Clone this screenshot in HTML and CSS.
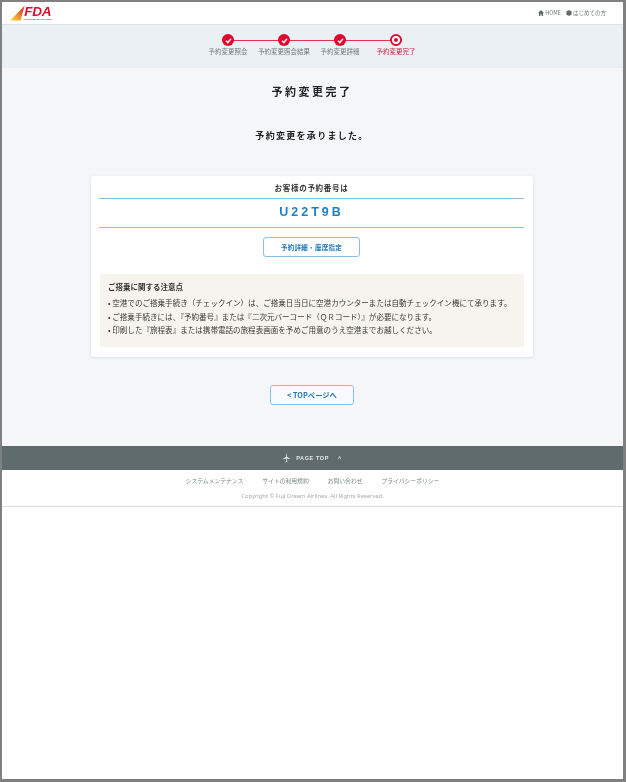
FILE: index.html
```html
<!DOCTYPE html>
<html lang="ja">
<head>
<meta charset="utf-8">
<title>予約変更完了</title>
<link rel="stylesheet" href="styles.css">
</head>
<body>
<div class="frame">
  <header class="site-header">
    <a class="logo">
      <svg class="wing" width="15" height="15" viewBox="0 0 15 15">
        <defs><linearGradient id="w" x1="0" y1="1" x2="1" y2="0"><stop offset="0.1" stop-color="#f6d23c"/><stop offset="0.55" stop-color="#ee7a28"/><stop offset="1" stop-color="#dc0d2e"/></linearGradient></defs>
        <path d="M0 14.5 L14.5 0 L10.5 14.5 Z" fill="url(#w)"/>
      </svg>
      <span class="logo-text"><span class="logo-name">FDA</span><span class="logo-sub">FUJI DREAM AIRLINES</span></span>
    </a>
    <nav class="top-nav">
      <a class="top-link"><svg width="6" height="6" viewBox="0 0 10 10"><path d="M5 0 L10 5 H8.5 V10 H6 V7 H4 V10 H1.500 V5 H0 Z" fill="#5f6b6d"/></svg>HOME</a>
      <a class="top-link"><svg width="6" height="6" viewBox="0 0 10 10"><circle cx="5" cy="5" r="4.500" fill="#5f6b6d"/></svg>はじめての方</a>
    </nav>
  </header>

  <section class="steps-band">
    <ol class="steps">
      <li class="step done"><span class="dot"><svg width="7" height="7" viewBox="0 0 10 10"><path d="M1.500 5.500 L4 8 L8.500 2.500" fill="none" stroke="#fff" stroke-width="2"/></svg></span><span class="label">予約変更照会</span></li>
      <li class="step done"><span class="dot"><svg width="7" height="7" viewBox="0 0 10 10"><path d="M1.500 5.500 L4 8 L8.500 2.500" fill="none" stroke="#fff" stroke-width="2"/></svg></span><span class="label">予約変更照会結果</span></li>
      <li class="step done"><span class="dot"><svg width="7" height="7" viewBox="0 0 10 10"><path d="M1.500 5.500 L4 8 L8.500 2.500" fill="none" stroke="#fff" stroke-width="2"/></svg></span><span class="label">予約変更詳細</span></li>
      <li class="step current"><span class="dot"><span class="dot-core"></span></span><span class="label">予約変更完了</span></li>
    </ol>
  </section>

  <main class="main">
    <h1 class="title">予約変更完了</h1>
    <p class="message">予約変更を承りました。</p>

    <section class="card">
      <h2 class="card-head">お客様の予約番号は</h2>
      <p class="code">U22T9B</p>
      <a class="btn btn-detail">予約詳細・座席指定</a>
      <div class="notes">
        <h3 class="notes-head">ご搭乗に関する注意点</h3>
        <ul class="notes-list">
          <li>空港でのご搭乗手続き（チェックイン）は、ご搭乗日当日に空港カウンターまたは自動チェックイン機にて承ります。</li>
          <li>ご搭乗手続きには、『予約番号』または『二次元バーコード（ＱＲコード）』が必要になります。</li>
          <li>印刷した『旅程表』または携帯電話の旅程表画面を予めご用意のうえ空港までお越しください。</li>
        </ul>
      </div>
    </section>

    <a class="btn btn-top">&lt; TOPページへ</a>
  </main>

  <a class="page-top">
    <svg width="7" height="12" viewBox="0 0 9 12"><path d="M4.500 0 C5 1 5 3 5 4.500 L9 7 V7.600 L5 6.800 L4.900 10 L6 11 V11.500 L4.500 11 L3 11.500 V11 L4.100 10 L4 6.800 L0 7.600 V7 L4 4.500 C4 3 4 1 4.500 0 Z" fill="#e6eaea"/></svg>
    <span>PAGE TOP</span>
    <span class="chev">^</span>
  </a>

  <footer class="site-footer">
    <nav class="foot-nav">
      <a>システムメンテナンス</a>
      <a>サイトの利用規約</a>
      <a>お問い合わせ</a>
      <a>プライバシーポリシー</a>
    </nav>
    <p class="copy">Copyright © Fuji Dream Airlines. All Rights Reserved.</p>
  </footer>
</div>
</body>
</html>
```

FILE: styles.css
```css
* { box-sizing: border-box; }
html, body { margin: 0; padding: 0; background: #fff; }
body { font-family: "Noto Sans CJK JP", "Noto Sans", sans-serif; color: #333; }
a { text-decoration: none; }
h1, h2, h3, p, ul, ol { margin: 0; padding: 0; list-style: none; }

.frame {
  width: 626px;
  height: 782px;
  border: solid #808080;
  border-width: 2px 3px 3px 2px;
  background: #fff;
  overflow: hidden;
  filter: blur(0.55px);
}

.site-header {
  height: 23px;
  display: flex;
  align-items: center;
  justify-content: space-between;
  padding: 0 17px 0 8px;
  background: #fff;
  border-bottom: 1px solid #dfe3e5;
}
.logo { display: flex; align-items: flex-end; height: 16px; margin-top: -1px; }
.wing { display: block; margin-right: -1px; }
.logo-text { display: flex; flex-direction: column; align-items: center; }
.logo-name {
  font: italic 700 13.5px/13px "Liberation Sans", sans-serif;
  color: #d8102f;
  letter-spacing: -0.3px;
}
.logo-sub {
  font: 700 2.5px/3px "Liberation Sans", sans-serif;
  color: #d8102f;
  white-space: nowrap;
}
.top-nav { display: flex; gap: 5px; }
.top-link {
  display: flex;
  align-items: center;
  gap: 1px;
  font-size: 5.5px;
  line-height: 8px;
  color: #6d7678;
}

.steps-band {
  height: 43px;
  background: #eaf0f3;
  display: flex;
  justify-content: center;
  padding: 9px 1px 0 0;
}
.steps { display: grid; grid-template-columns: repeat(4, 56px); }
.step {
  position: relative;
  display: flex;
  flex-direction: column;
  align-items: center;
  gap: 1px;
}
.step:not(:last-child)::after {
  content: "";
  position: absolute;
  left: 28px;
  top: 5.5px;
  width: 56px;
  height: 1px;
  background: #e2334f;
}
.dot {
  position: relative;
  z-index: 1;
  width: 12px;
  height: 12px;
  border-radius: 50%;
  background: #db0a2e;
  display: flex;
  align-items: center;
  justify-content: center;
}
.current .dot { background: #fff; border: 2px solid #db0a2e; }
.dot-core { width: 4px; height: 4px; border-radius: 50%; background: #db0a2e; }
.label {
  font-size: 6.5px;
  line-height: 9px;
  white-space: nowrap;
  color: #717a7d;
}
.current .label { color: #d31a3c; }

.main {
  height: 378px;
  background: #f4f6f8;
  display: flex;
  flex-direction: column;
  align-items: center;
  padding: 15px 1px 0 0;
}
.title {
  font-size: 11px;
  line-height: 16px;
  font-weight: 700;
  letter-spacing: 2.5px;
  color: #222;
}
.message {
  margin-top: 30px;
  font-size: 9px;
  line-height: 13px;
  font-weight: 700;
  letter-spacing: 1.3px;
  color: #222;
}
.card {
  margin-top: 34px;
  width: 442px;
  height: 181px;
  background: #fff;
  border-radius: 3px;
  box-shadow: 0 1px 3px rgba(90, 105, 115, 0.18);
  padding: 7px 9px 0 8px;
  display: flex;
  flex-direction: column;
  align-items: center;
}
.card-head {
  font-size: 7.5px;
  line-height: 10px;
  font-weight: 700;
  letter-spacing: 0.7px;
  color: #333;
  margin-bottom: 5px;
}
.code {
  align-self: stretch;
  height: 30px;
  border-top: 1px solid #8cc0e2;
  border-bottom: 1px solid #8cc0e2;
  text-align: center;
  font: 700 12.5px/27px "Liberation Sans", sans-serif;
  letter-spacing: 3px;
  color: #1f7fc0;
}
.btn {
  display: flex;
  align-items: center;
  justify-content: center;
  background: #fff;
  border: 1.5px solid #8cc0e2;
  border-radius: 3px;
  color: #1f78b8;
  font-weight: 700;
  white-space: nowrap;
}
.btn-detail {
  margin-top: 9px;
  width: 97px;
  height: 20px;
  font-size: 6.5px;
  letter-spacing: 0.3px;
}
.notes {
  margin-top: 17px;
  margin-left: 1px;
  align-self: stretch;
  height: 73px;
  background: #f7f3ee;
  border-radius: 2px;
  padding: 7px 8px 0 8px;
}
.notes-head {
  font-size: 7.5px;
  line-height: 11px;
  font-weight: 700;
  color: #333;
  margin-bottom: 4px;
}
.notes-list li {
  font-size: 7.55px;
  line-height: 13.5px;
  white-space: nowrap;
  color: #3a3a3a;
}
.notes-list li::before { content: "• "; }

.btn-top {
  margin-top: 28px;
  width: 84px;
  height: 20px;
  font-size: 7.3px;
  background: #f8fafb;
}

.page-top {
  height: 24px;
  background: #5f6b6d;
  display: flex;
  align-items: center;
  justify-content: center;
  gap: 6px;
  font: 700 5.5px/8px "Liberation Sans", sans-serif;
  letter-spacing: 0.6px;
  color: #e6eaea;
}
.chev { margin-left: 3px; }

.site-footer {
  height: 37px;
  border-bottom: 1px solid #d9dcde;
  background: #fff;
  padding-top: 6px;
}
.foot-nav {
  display: flex;
  justify-content: center;
  gap: 19px;
  font-size: 5.8px;
  line-height: 9px;
  color: #7d8688;
}
.copy {
  margin-top: 7px;
  text-align: center;
  font: 5.8px/8px "Noto Sans", sans-serif;
  color: #a3abad;
}
```
